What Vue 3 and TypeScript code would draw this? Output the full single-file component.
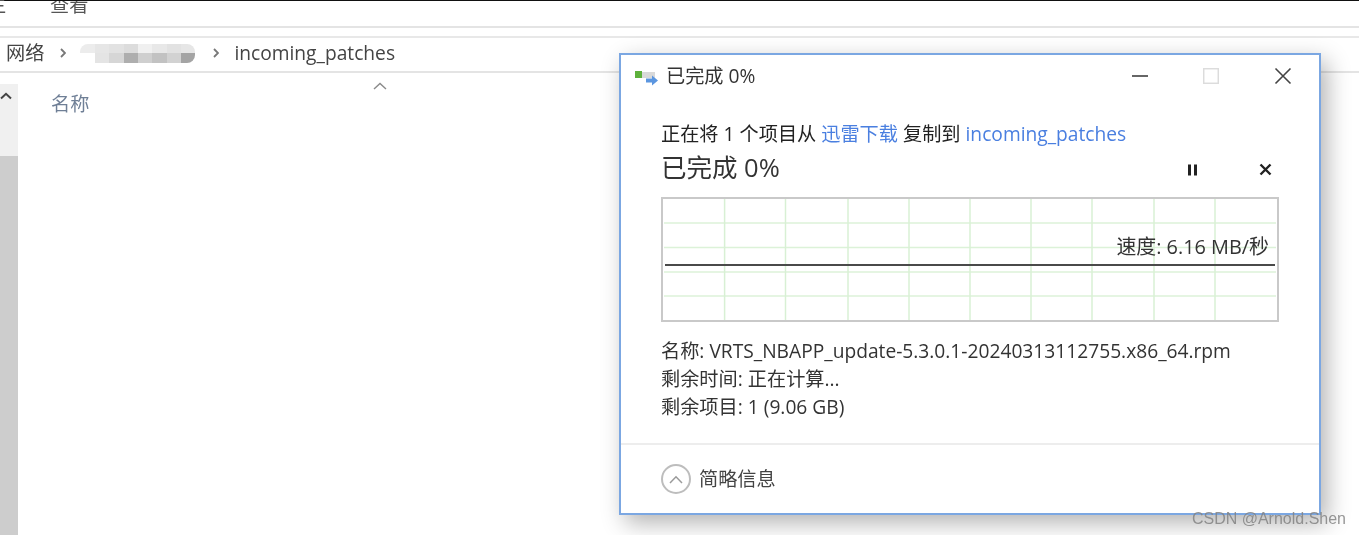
<script setup lang="ts">
const infoRows = [
  { label: '名称:', value: 'VRTS_NBAPP_update-5.3.0.1-20240313112755.x86_64.rpm' },
  { label: '剩余时间:', value: '正在计算...' },
  { label: '剩余项目:', value: '1 (9.06 GB)' }
]

// 打码区域的两排色块
const maskTop = ['#ececec', '#e6e6e6', '#e2e2e2', '#dcdcdc', '#f0f0f0', '#e8e8e8', '#e2e2e2', '#e6e6e6']
const maskBottom = ['#ffffff', '#e4e4e4', '#d6d6d6', '#aeaeae', '#cfcfcf', '#c2c2c2', '#d2d2d2', '#a4a4a4']

// 图表网格线位置
const gridX = [61.6, 122.5, 185, 246, 307, 368, 429, 491, 552]
const gridY = [24, 48.5, 73, 97]
</script>

<template>
  <div class="page">
    <div class="explorer">
      <div class="ribbon">
        <span class="ribbon-tab clipped">主</span>
        <span class="ribbon-tab">查看</span>
      </div>
      <div class="address">
        <span class="crumb">网络</span>
        <svg class="chev" width="6" height="10" viewBox="0 0 6 10">
          <path d="M1 1 L5 5 L1 9" fill="none" stroke="#777" stroke-width="1.8" />
        </svg>
        <span class="masked">
          <i v-for="(c, i) in maskTop" :key="'t' + i" :style="{ background: c }"></i>
          <i v-for="(c, i) in maskBottom" :key="'b' + i" :style="{ background: c }"></i>
        </span>
        <svg class="chev chev-last" width="6" height="10" viewBox="0 0 6 10">
          <path d="M1 1 L5 5 L1 9" fill="none" stroke="#777" stroke-width="1.8" />
        </svg>
        <span class="crumb path">incoming_patches</span>
      </div>
      <div class="content">
        <div class="scrollbar">
          <svg class="scroll-up" width="12" height="8" viewBox="0 0 12 8">
            <path d="M1 6.5 L6 1.8 L11 6.5" fill="none" stroke="#444" stroke-width="2" />
          </svg>
          <div class="thumb"></div>
        </div>
        <div class="columns">
          <span class="col-name">名称</span>
          <svg class="sort" width="14" height="8" viewBox="0 0 14 8">
            <path d="M1 7 L7 1.5 L13 7" fill="none" stroke="#8a8a8a" stroke-width="1.4" />
          </svg>
        </div>
      </div>
    </div>

    <section class="dialog">
      <header class="title-bar">
        <svg class="title-icon" width="24" height="16" viewBox="0 0 24 16">
          <rect x="0" y="1" width="7" height="7" fill="#5eb13c" />
          <rect x="7" y="2" width="13" height="6" fill="#d9d9d9" />
          <path d="M11 8.5 H17 V5.5 L23 10.5 L17 15.5 V12.5 H11 Z" fill="#5b96e0" />
        </svg>
        <span class="title-text">已完成 0%</span>
        <div class="win-buttons">
          <svg width="16" height="16" viewBox="0 0 16 16"><path d="M0 8 H16" stroke="#555" stroke-width="1.8" /></svg>
          <svg width="16" height="16" viewBox="0 0 16 16"><rect x="0.7" y="0.7" width="14.6" height="14.6" fill="none" stroke="#dcdcdc" stroke-width="1.5" /></svg>
          <svg width="18" height="18" viewBox="0 0 18 18"><path d="M1.5 1.5 L16.5 16.5 M16.5 1.5 L1.5 16.5" stroke="#444" stroke-width="1.6" /></svg>
        </div>
      </header>

      <div class="body">
        <p class="copy-line">
          正在将 1 个项目从 <a class="link">迅雷下载</a> 复制到 <a class="link">incoming_patches</a>
        </p>
        <div class="progress-head">
          <span class="percent">已完成 0%</span>
          <div class="controls">
            <svg width="12" height="12" viewBox="0 0 12 12">
              <rect x="1" y="0.5" width="3" height="11" fill="#222" />
              <rect x="7" y="0.5" width="3" height="11" fill="#222" />
            </svg>
            <svg width="13" height="13" viewBox="0 0 13 13">
              <path d="M1.5 1.5 L11.5 11.5 M11.5 1.5 L1.5 11.5" stroke="#222" stroke-width="2.4" />
            </svg>
          </div>
        </div>

        <div class="chart">
          <svg class="grid" width="614" height="121" viewBox="0 0 614 121">
            <line v-for="y in gridY" :key="'y' + y" x1="1" x2="613" :y1="y" :y2="y" stroke="#dcf2d8" stroke-width="1.5" />
            <line v-for="x in gridX" :key="'x' + x" :x1="x" :x2="x" y1="0" y2="121" stroke="#d8f0d4" stroke-width="1.5" />
          </svg>
          <div class="speed-line"></div>
          <span class="speed">速度: 6.16 MB/秒</span>
        </div>

        <ul class="info">
          <li v-for="row in infoRows" :key="row.label">{{ row.label }} {{ row.value }}</li>
        </ul>
      </div>

      <footer class="footer">
        <span class="collapse">
          <svg width="14" height="9" viewBox="0 0 14 9">
            <path d="M1 8 L7 1.8 L13 8" fill="none" stroke="#9a9a9a" stroke-width="1.5" />
          </svg>
        </span>
        <span class="footer-text">简略信息</span>
      </footer>
    </section>

    <span class="watermark">CSDN @Arnold.Shen</span>
  </div>
</template>

<style>
html,
body {
  margin: 0;
  background: #fff;
}
</style>

<style scoped>
.page {
  position: relative;
  width: 1359px;
  height: 535px;
  overflow: hidden;
  background: #fff;
  font-family: "Open Sans", "Noto Sans CJK SC", sans-serif;
  font-size: 19.2px;
  color: #333;
}

.explorer {
  display: flex;
  flex-direction: column;
  height: 100%;
  border-top: 1px solid #111;
  box-sizing: border-box;
  filter: blur(0.5px);
}

.ribbon {
  display: flex;
  height: 25px;
  padding-left: 50px;
  border-bottom: 2px solid #e4e4e4;
  overflow: hidden;
}

.ribbon-tab {
  display: block;
  margin-top: -8px;
  line-height: 24px;
  color: #555;
}

.clipped {
  position: absolute;
  left: -13px;
}

.address {
  display: flex;
  align-items: center;
  margin-top: 8px;
  padding: 0 0 4px 6px;
  height: 29px;
  border-top: 2px solid #e8e8e8;
  border-bottom: 2px solid #e4e4e4;
  color: #444;
}

.crumb {
  line-height: 24px;
}

.chev {
  flex: none;
  margin: 1px 14px 0 16px;
}

.chev-last {
  margin-left: 18px;
  margin-right: 15px;
}

.masked {
  display: grid;
  grid-template-columns: repeat(8, 1fr);
  grid-template-rows: 9px 10px;
  width: 115px;
  height: 19px;
  margin-top: 1px;
  overflow: hidden;
  border-radius: 8px;
}

.content {
  flex: 1;
  display: flex;
  padding-top: 11px;
}

.scrollbar {
  display: flex;
  flex-direction: column;
  width: 18px;
  background: #f0f0f0;
}

.scroll-up {
  margin: 8px 0 0 0;
}

.thumb {
  flex: 1;
  margin-top: 56px;
  background: #cdcdcd;
}

.columns {
  display: flex;
  align-items: flex-start;
  flex: 1;
}

.col-name {
  margin: 8px 0 0 33px;
  line-height: 24px;
  color: #6f7f96;
}

.sort {
  margin: -2px 0 0 284px;
}

.dialog {
  position: absolute;
  left: 619px;
  top: 53px;
  width: 702px;
  height: 462px;
  box-sizing: border-box;
  display: flex;
  flex-direction: column;
  background: #fff;
  border: 2px solid #7ba7e2;
  box-shadow: 6px 8px 22px rgba(0, 0, 0, 0.3);
  filter: blur(0.4px);
}

.title-bar {
  display: flex;
  align-items: center;
  height: 42px;
  padding: 0 27px 0 14px;
}

.title-icon {
  margin-top: 3px;
}

.title-text {
  margin-left: 7px;
  line-height: 26px;
  color: #333;
}

.win-buttons {
  display: flex;
  align-items: center;
  gap: 55px;
  margin-left: auto;
}

.body {
  flex: 1;
  padding: 24px 40px 0;
}

.copy-line {
  margin: 0;
  line-height: 26px;
  color: #222;
}

.link {
  color: #4a7fe0;
}

.progress-head {
  display: flex;
  align-items: center;
  justify-content: space-between;
  height: 36px;
}

.percent {
  padding-top: 4px;
  font-size: 25.5px;
  line-height: 36px;
  color: #333;
}

.controls {
  display: flex;
  align-items: center;
  gap: 60px;
  margin-right: 7px;
  margin-top: 9px;
}

.chart {
  position: relative;
  width: 618px;
  height: 125px;
  margin-top: 14px;
  box-sizing: border-box;
  border: 2px solid #c9c9c9;
  background: #fff;
}

.grid {
  position: absolute;
  left: 0;
  top: 0;
}

.speed-line {
  position: absolute;
  left: 2px;
  right: 2px;
  top: 64.5px;
  height: 2px;
  background: #4a4a4a;
}

.speed {
  position: absolute;
  right: 8px;
  top: 36px;
  font-size: 19.9px;
  line-height: 24px;
  color: #333;
}

.info {
  margin: 15px 0 0;
  padding: 0;
  list-style: none;
  line-height: 28px;
  color: #333;
}

.footer {
  display: flex;
  align-items: center;
  height: 68px;
  padding-left: 40px;
  border-top: 2px solid #ededed;
}

.collapse {
  display: flex;
  align-items: center;
  justify-content: center;
  box-sizing: border-box;
  width: 30px;
  height: 30px;
  border: 2px solid #bdbdbd;
  border-radius: 50%;
}

.footer-text {
  margin-left: 8px;
  line-height: 26px;
  color: #444;
}

.watermark {
  position: absolute;
  right: 13px;
  top: 508px;
  font-family: "Liberation Sans", sans-serif;
  font-size: 16px;
  line-height: 22px;
  color: rgba(130, 130, 130, 0.85);
}
</style>
